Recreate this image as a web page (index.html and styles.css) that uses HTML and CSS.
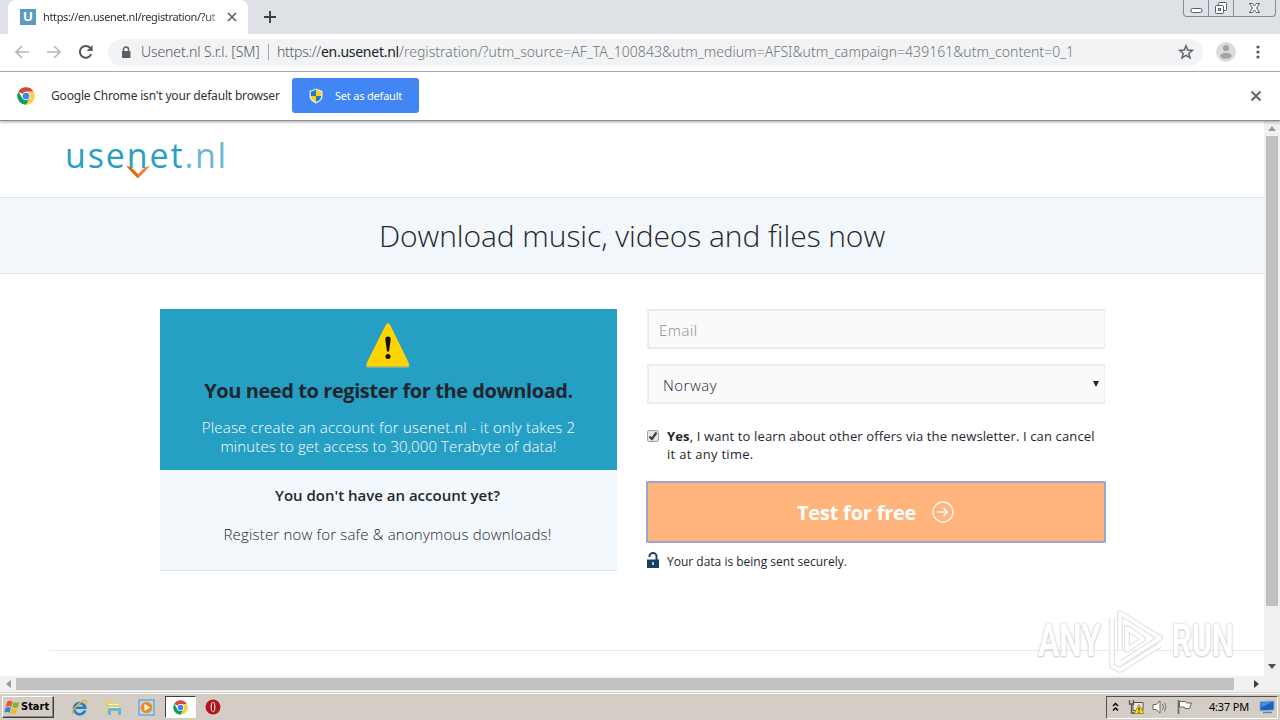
FILE: index.html
```html
<!DOCTYPE html>
<html lang="en">
<head>
<meta charset="utf-8">
<title>Usenet.nl registration</title>
<link rel="stylesheet" href="styles.css">
</head>
<body>
<svg class="defs" width="0" height="0">
  <symbol id="chrome" viewBox="0 0 48 48">
    <circle cx="24" cy="24" r="23" fill="#fff"/>
    <path d="M24 24 4 12.500A23 23 0 0 1 44 12.500H24z" fill="#db4437"/>
    <path d="M44 12.500A23 23 0 0 1 24 47L34 29.500 24 12.500z" fill="#ffcd40"/>
    <path d="M4 12.500A23 23 0 0 0 24 47L34 29.500H14z" fill="#0f9d58"/>
    <circle cx="24" cy="24" r="11.500" fill="#fff"/>
    <circle cx="24" cy="24" r="9" fill="#4285f4"/>
  </symbol>
</svg>
<div class="screen">
  <header class="tabstrip">
    <div class="tab">
      <span class="favicon">U</span>
      <span class="tab-title">https://en.usenet.nl/registration/?ut</span>
      <svg class="tab-close" width="10" height="10" viewBox="0 0 10 10"><path d="M1 1l8 8M9 1l-8 8" stroke="#5f6368" stroke-width="1.700"/></svg>
    </div>
    <svg class="new-tab" width="14" height="14" viewBox="0 0 14 14"><path d="M7 1v12M1 7h12" stroke="#3c4043" stroke-width="1.900"/></svg>
    <div class="window-buttons">
      <span class="wb-min"><svg width="13" height="16" viewBox="0 0 13 16"><rect x="1" y="8.500" width="11" height="4" rx="1.500" fill="#fff" stroke="#555b66"/></svg></span>
      <span class="wb-max"><svg width="14" height="16" viewBox="0 0 14 16"><g fill="#fff" stroke="#555b66"><rect x="4.500" y="2.500" width="8" height="8" rx="1"/><rect x="1.500" y="5.500" width="8" height="8" rx="1"/><rect x="4.500" y="8.500" width="2" height="2"/></g></svg></span>
      <span class="wb-close"><svg width="13" height="16" viewBox="0 0 13 16"><path d="M1.500 3.500h3l2 2.500 2-2.500h3L8.500 8l3 4.500h-3l-2-2.500-2 2.500h-3L4.500 8z" fill="#fff" stroke="#555b66"/></svg></span>
    </div>
  </header>

  <div class="toolbar">
    <svg class="nav" width="16" height="16" viewBox="0 0 16 16"><path d="M15 8H2M8 2 2 8l6 6" fill="none" stroke="#b5b7ba" stroke-width="1.700"/></svg>
    <svg class="nav" width="16" height="16" viewBox="0 0 16 16"><path d="M1 8h13M8 2l6 6-6 6" fill="none" stroke="#b5b7ba" stroke-width="1.700"/></svg>
    <svg class="nav" width="16" height="16" viewBox="0 0 16 16"><path d="M13.200 10.200A5.900 5.900 0 1 1 12.300 4" fill="none" stroke="#55595e" stroke-width="2"/><path d="M14.600 1v6H8.700z" fill="#55595e"/></svg>
    <div class="omnibox">
      <svg class="lock" width="10" height="13" viewBox="0 0 10 13"><path d="M2.500 6V3.500a2.500 2.500 0 0 1 5 0V6" fill="none" stroke="#5a5e63" stroke-width="1.500"/><rect x="1" y="5" width="8.500" height="7" rx="1" fill="#5a5e63"/></svg>
      <span class="issuer">Usenet.nl S.r.l. [SM]</span>
      <span class="divider"></span>
      <span class="url-a">https://<b>en.usenet.nl</b></span><span class="url-b">/registration/?utm_source=AF_TA_100843&amp;utm_medium=AFSI&amp;utm_campaign=439161&amp;utm_content=0_1</span>
      <svg class="star" width="16" height="16" viewBox="0 0 16 16"><path d="M8 1.800l1.700 4.300 4.700.3-3.600 3 1.200 4.500L8 11.400l-4 2.500 1.200-4.500-3.600-3 4.700-.3z" fill="none" stroke="#5f6368" stroke-width="1.500"/></svg>
    </div>
    <svg class="avatar" width="20" height="20" viewBox="0 0 20 20"><circle cx="10" cy="10" r="10" fill="#dcdcdc"/><circle cx="10" cy="6" r="3.100" fill="#a5a5a5"/><ellipse cx="10" cy="13.800" rx="5.800" ry="3" fill="#a5a5a5"/></svg>
    <svg class="kebab" width="4" height="14" viewBox="0 0 4 14"><g fill="#55595e"><circle cx="2" cy="2" r="1.600"/><circle cx="2" cy="7" r="1.600"/><circle cx="2" cy="12" r="1.600"/></g></svg>
  </div>

  <div class="infobar">
    <svg width="18" height="18"><use href="#chrome"/></svg>
    <span class="info-text">Google Chrome isn't your default browser</span>
    <div class="set-default">
      <svg width="14" height="16" viewBox="0 0 14 16"><path d="M7 .5 13.500 3v5c0 4-3.500 6-6.500 7.500C4 14 .5 12 .5 8V3z" fill="#e8edf3"/><path d="M7 1.800V8H1.800V3.800z" fill="#2478c8"/><path d="M7 1.800V8h5.200V3.800z" fill="#fcd116"/><path d="M7 14V8H1.800c0 3 2 4.500 5.200 6z" fill="#fcd116"/><path d="M7 14V8h5.200c0 3-2 4.500-5.200 6z" fill="#2478c8"/></svg>
      <span>Set as default</span>
    </div>
    <svg class="info-close" width="12" height="12" viewBox="0 0 12 12"><path d="M1.500 1.500l9 9M10.500 1.500l-9 9" stroke="#5f6368" stroke-width="1.900"/></svg>
  </div>

  <div class="view">
    <main class="page">
      <div class="brand">
        <span class="brand-name">usenet</span><span class="brand-tld">.nl</span>
        <svg class="brand-check" width="26" height="14" viewBox="0 0 26 14"><path d="M1 1q4 0 7 3l5 5v4.500L7 7.500Q4 4 1 1z" fill="#e3680c"/><path d="M13 13.500V9l5-5q3-3 7-3-3 3-6 6.500z" fill="#f58345"/></svg>
      </div>
      <h1 class="banner"><span>Download music, videos and files now</span></h1>
      <div class="columns">
        <section class="promo">
          <div class="promo-top">
            <svg width="46" height="46" viewBox="0 0 46 46"><path d="M20.500 3.500q2.500-4.500 5 0l18 37q1.500 4-2.500 4H4q-4 0-2-4z" fill="#ffd500"/><path d="M1.500 43.500q.5 1.500 2.500 1.500h37.500q2 0 2.500-1.500" fill="none" stroke="#d8c06a" stroke-width="1.200"/><path d="M20.300 17.500q0-3 2.700-3t2.700 3L24 29.500h-2z" fill="#111"/><circle cx="23" cy="34.500" r="2.500" fill="#111"/></svg>
            <h2><span>You need to register for the download.</span></h2>
            <p><span class="p1">Please create an account for usenet.nl - it only takes 2</span><br><span class="p2">minutes to get access to 30,000 Terabyte of data!</span></p>
          </div>
          <div class="promo-bottom">
            <h3>You don't have an account yet?</h3>
            <p>Register now for safe &amp; anonymous downloads!</p>
          </div>
        </section>
        <section class="form">
          <div class="field email">Email</div>
          <div class="field country"><span>Norway</span><svg width="6" height="6" viewBox="0 0 6 6"><path d="M0 0h6L3 6z" fill="#222"/></svg></div>
          <div class="consent">
            <span class="checkbox"><svg width="10" height="10" viewBox="0 0 10 10"><path d="M1.500 5.500l2.400 2.500L8.500 1.500" fill="none" stroke="#3c3f44" stroke-width="2.200"/></svg></span>
            <p><span class="c1"><b>Yes</b>, I want to learn about other offers via the newsletter. I can cancel</span><br><span class="c2">it at any time.</span></p>
          </div>
          <div class="submit"><span>Test for free</span><svg width="22" height="22" viewBox="0 0 22 22"><g fill="none" stroke="#fff" stroke-width="1.300"><circle cx="11" cy="11" r="10"/><path d="M5.500 11h10M11.500 7l4 4-4 4"/></g></svg></div>
          <div class="secure"><svg width="12" height="16" viewBox="0 0 12 16"><path d="M2.500 5V4a3.500 3 0 0 1 7 0V8" fill="none" stroke="#1c3f60" stroke-width="1.900"/><rect y="7.500" width="12" height="8.500" fill="#1c3f60"/><rect x="5" y="10" width="2" height="3" fill="#9bd0e0"/></svg><span>Your data is being sent securely.</span></div>
        </section>
      </div>
      <hr class="rule">
    </main>
    <div class="vscroll">
      <svg width="8" height="5" viewBox="0 0 8 5"><path d="M0 5h8L4 0z" fill="#999"/></svg>
      <div class="vthumb"></div>
      <svg width="8" height="5" viewBox="0 0 8 5"><path d="M0 0h8L4 5z" fill="#505050"/></svg>
    </div>
    <div class="watermark">
      <span class="wm-any">ANY</span>
      <svg width="58" height="66" viewBox="0 0 58 66"><g fill="none" stroke-linejoin="round" stroke="#e2e2e2" stroke-width="6"><path d="M13 42V5l40 25-39 25"/><path d="M5 10v48l8 4 40-25"/><path d="M20 20v22l16-11z"/></g><g fill="none" stroke-linejoin="round" stroke="#fff" stroke-width="3.500"><path d="M13 42V5l40 25-39 25"/><path d="M5 10v48l8 4 40-25"/><path d="M20 20v22l16-11z"/></g></svg>
      <span class="wm-run">RUN</span>
    </div>
  </div>

  <div class="hscroll">
    <svg width="5" height="8" viewBox="0 0 5 8"><path d="M5 0v8L0 4z" fill="#999"/></svg>
    <div class="hthumb"></div>
    <svg class="right" width="5" height="8" viewBox="0 0 5 8"><path d="M0 0v8l5-4z" fill="#404040"/></svg>
  </div>

  <footer class="taskbar">
    <div class="start">
      <svg width="17" height="17" viewBox="0 0 16 16"><path d="M3 2.500Q5.500 1 8 2.500L6.800 7.500Q4.500 6 1.700 7.300z" fill="#e8592b"/><path d="M8.900 2.900q2.500 1.300 5.500 0L13 8q-2.500 1-5.200-.2z" fill="#7fb52e"/><path d="M1.500 8.200q2.500-1.200 5 .2L5.300 13Q3 11.700.3 12.800z" fill="#3a83cf"/><path d="M7.400 8.700q2.500 1.200 5.300.2l-1.300 4.800q-2.500 1.200-5.200-.2z" fill="#f5b921"/></svg>
      <span>Start</span>
    </div>
    <div class="quick">
      <svg width="17" height="17" viewBox="0 0 17 17"><path d="M14 11.500A5.600 5.600 0 1 1 14.200 8.800H4" fill="none" stroke="#1c7fd0" stroke-width="2.600"/><path d="M2 15.500C-1 12 10 1 15 1.500c1.500.5.500 3-.5 4" fill="none" stroke="#e8b62c" stroke-width="1.300"/></svg>
      <svg width="17" height="17" viewBox="0 0 17 17"><path d="M1 2h5l1 2h7v10H1z" fill="#e9cf70"/><path d="M3 5h11v6H3z" fill="#f8efb5"/><path d="M3 9h13v7h-3v-4H6v4H3z" fill="#66b6e4"/><path d="M2 7h12" stroke="#8bc06a"/></svg>
      <svg width="17" height="17" viewBox="0 0 17 17"><rect x="1" y="1" width="15" height="15" fill="#b9d9f4" stroke="#4b8fd0"/><circle cx="8.500" cy="8.500" r="5.800" fill="#f28a18"/><path d="M6.500 5v7l5.500-3.500z" fill="#fff"/></svg>
      <div class="active-task"><svg width="15" height="15"><use href="#chrome"/></svg></div>
      <svg class="opera" width="16" height="16" viewBox="0 0 16 16"><circle cx="8" cy="8" r="7.500" fill="#b91319"/><ellipse cx="8" cy="8" rx="2.800" ry="5.500" fill="#f3e2e0" stroke="#6d0b0e" stroke-width=".6"/><ellipse cx="8" cy="8" rx="1.200" ry="4.500" fill="#a21116"/></svg>
    </div>
    <div class="tray">
      <svg width="7" height="10" viewBox="0 0 7 10"><path d="M1 4l2.500-2.500L6 4M1 8.500L3.500 6 6 8.500" fill="none" stroke="#000" stroke-width="1.400"/></svg>
      <svg class="net" width="17" height="16" viewBox="0 0 17 16"><path d="M5 3.500h10v8H5z" fill="#e9e9e9" stroke="#555"/><path d="M1.500 1v4h4V1M3.500 5v9H7" fill="none" stroke="#555" stroke-width="1.300"/><path d="M11 5.500l5 9H6z" fill="#ffdc18" stroke="#8b7300" stroke-width=".7"/><path d="M11 8.500v3M11 12.500v1.200" stroke="#222" stroke-width="1.200"/></svg>
      <svg class="snd" width="17" height="16" viewBox="0 0 17 16"><path d="M1 5.500h3L8 2v12l-4-3.500H1z" fill="#fff" stroke="#666"/><path d="M10.500 5q2 3 0 6M12.500 3.500q3 4.500 0 9" fill="none" stroke="#777"/></svg>
      <svg class="flag" width="17" height="16" viewBox="0 0 17 16"><path d="M2.500 1v14" stroke="#666" stroke-width="1.600"/><path d="M3.500 2.500h6l1 1.500h5l-2 5.500H9l-1-1.500H3.500z" fill="#fff" stroke="#666"/></svg>
      <span class="clock">4:37 PM</span>
      <svg class="desk" width="16" height="14" viewBox="0 0 16 14"><path d="M1 1.500 15 1v9l-14 1z" fill="#1763bd" stroke="#8db5df"/><path d="M2 2.500 13 2 3 7z" fill="#4a94df"/><path d="M4 12.500h9" stroke="#697f9c" stroke-width="1.500"/></svg>
    </div>
  </footer>
</div>
</body>
</html>
```

FILE: styles.css
```css
* { box-sizing: border-box; }
body { margin: 0; background: #fff; font-family: "Open Sans", "Noto Sans", sans-serif; }
h1, h2, h3, p { margin: 0; font-weight: inherit; }
svg { display: block; flex: none; }
.defs { position: absolute; }
.screen { width: 1280px; height: 720px; display: flex; flex-direction: column; overflow: hidden; white-space: nowrap; }

.tabstrip { height: 34px; flex: none; background: #dee1e6; display: flex; align-items: flex-start; }
.tab { width: 240px; height: 34px; margin-left: 8px; padding-left: 12px; background: #fff; border-radius: 8px 8px 0 0; display: flex; align-items: center; }
.favicon { width: 16px; height: 16px; background: #5a9bc3; color: #fff; font: 700 13px/16px "Liberation Sans", sans-serif; text-align: center; }
.tab-title { width: 176px; margin-left: 7px; font: 11px/16px "Noto Sans", sans-serif; color: #303236; letter-spacing: -.36px; -webkit-mask-image: linear-gradient(90deg, #000 92%, rgba(0,0,0,.3)); mask-image: linear-gradient(90deg, #000 92%, rgba(0,0,0,.3)); }
.tab-close { margin-left: 8px; }
.new-tab { margin: 10px 0 0 15px; }
.window-buttons { margin-left: auto; margin-right: 4px; display: flex; height: 17px; border: 1px solid #858b96; border-top: 0; border-radius: 0 0 4px 4px; }
.window-buttons span { display: flex; justify-content: center; border-right: 1px solid #858b96; }
.wb-min { width: 25px; }
.wb-max { width: 25px; }
.window-buttons .wb-close { width: 41px; border-right: 0; }

.toolbar { height: 38px; flex: none; display: flex; align-items: center; padding: 0 0 1px 14px; border-bottom: 1px solid #b4b4b8; background: #fff; }
.nav { margin-right: 16px; }
.omnibox { width: 1095px; height: 27px; margin-left: -2px; border-radius: 14px; background: #f1f3f4; display: flex; align-items: center; padding-left: 13px; font: 300 14px/20px "Noto Sans", sans-serif; color: #55595f; }
.issuer { margin-left: 10px; letter-spacing: -.1px; width: 120px; }
.divider { width: 1px; height: 16px; background: #a5a8ac; margin: 0 8px 0 7px; }
.url-a { width: 122px; letter-spacing: -.26px; }
.url-a b { font-weight: 400; color: #202124; }
.url-b { color: #707478; letter-spacing: .04px; }
.star { margin-left: auto; margin-right: 9px; }
.avatar { margin-left: 13px; }
.kebab { margin-left: 20px; }

.infobar { height: 49px; flex: none; display: flex; align-items: center; padding: 0 0 1px 17px; background: #fff; border-bottom: 1px solid #8c8c8c; box-shadow: 0 1px 3px rgba(0,0,0,.35); position: relative; z-index: 1; }
.info-text { width: 229px; margin-left: 16px; font: 12px/16px "Noto Sans", sans-serif; color: #303236; letter-spacing: -.18px; }
.set-default { width: 127px; height: 35px; margin-left: 12px; border-radius: 3px; background: #4285f4; color: #fff; display: flex; align-items: center; padding-left: 17px; font: 11px/16px "Noto Sans", sans-serif; }
.set-default span { margin-left: 12px; letter-spacing: -.2px; }
.info-close { margin-left: auto; margin-right: 18px; }

.view { height: 555px; flex: none; display: flex; position: relative; }
.page { width: 1264px; color: #1f262d; font-weight: 300; }
.brand { height: 76px; padding: 7px 0 0 65px; position: relative; font: 300 34px/54px "Open Sans", sans-serif; color: #2aa0bf; }
.brand-name { font-weight: 400; letter-spacing: 1.9px; }
.brand-tld { color: #6cb9cd; letter-spacing: 1.5px; font-weight: 400; }
.brand-check { position: absolute; left: 125px; top: 44px; }
.banner { height: 77px; border: 1px solid #d5e9ec; border-width: 1px 0; background: #f1f7fa; font-size: 30px; font-weight: 300; line-height: 75px; letter-spacing: -.08px; text-align: center; }
.columns { display: flex; gap: 30px; margin: 35px 0 0 160px; }
.promo { width: 457px; height: 262px; text-align: center; }
.promo-top { height: 161px; background: #269fc4; color: #fff; padding-top: 13px; }
.promo-top svg { margin: 0 auto 0 205px; }
.promo-top h2 { margin-top: 9px; font-size: 20px; line-height: 28px; font-weight: 700; color: #1f262d; letter-spacing: -.42px; }
.promo-top p { margin-top: 13px; font-size: 15px; line-height: 19px; }
.p1 { letter-spacing: .21px; }
.p2 { letter-spacing: .11px; }
.promo-bottom { height: 101px; background: #f2f8fb; border-bottom: 1px solid #d5e4e9; padding: 15px 2px 0 0; font-size: 15px; line-height: 20px; }
.promo-bottom h3 { font-size: 15px; font-weight: 600; }
.promo-bottom p { margin-top: 19px; letter-spacing: .18px; }
.form { width: 458px; }
.field { height: 40px; border: 2px solid #ececec; border-right-width: 1px; background: #fafafa; font-size: 15px; line-height: 38px; letter-spacing: .5px; display: flex; }
.email { padding-left: 10px; color: #85888c; margin-bottom: 15px; }
.country { padding: 0 5px 0 14px; justify-content: space-between; line-height: 38px; }
.country svg { margin-top: 15px; }
.consent { display: flex; margin-top: 23px; font-size: 13px; line-height: 18px; font-weight: 400; }
.c1 { letter-spacing: .13px; }
.c2 { letter-spacing: .28px; }
.checkbox { width: 12px; height: 12px; margin: 3px 8px 0 0; border: 1px solid #a4a4a4; border-radius: 2px; background: #e6e6e6; }
.submit { width: 460px; height: 62px; margin: 18px 0 0 -1px; border: 2px solid #97a6d4; border-radius: 2px; background: #ffb47b; color: #fff; display: flex; align-items: center; padding-left: 149px; font-size: 20px; font-weight: 700; letter-spacing: -.22px; }
.submit svg { margin-left: 16px; }
.secure { display: flex; margin-top: 9px; font-size: 12px; line-height: 20px; font-weight: 400; gap: 8px; }
.rule { height: 1px; border: 0; background: #e9e9e9; margin: 78px 0 0 49px; }
.vscroll { width: 16px; background: #f1f1f1; display: flex; flex-direction: column; align-items: center; padding-top: 5px; }
.vthumb { width: 12px; height: 470px; margin: 5px 0 58px; background: #c1c1c1; }
.watermark { position: absolute; left: 1038px; top: 487px; display: flex; align-items: center; gap: 7px; font: 700 44px/66px "Roboto", sans-serif; color: #fff; text-shadow: 0 0 3px #bbb, 0 1px 2px #ccc; opacity: .9; }
.watermark span { display: block; transform-origin: 0 50%; }
.wm-any { width: 62px; transform: scaleX(.72); }
.wm-run { width: 64px; transform: scaleX(.7); }

.hscroll { height: 16px; flex: none; background: #f1f1f1; display: flex; align-items: center; padding-left: 6px; }
.hthumb { width: 1218px; height: 12px; margin-left: 5px; background: #c1c1c1; }
.hscroll .right { margin-left: 20px; }

.taskbar { height: 28px; flex: none; border-top: 1px solid #d4d0c8; box-shadow: inset 0 1px #fff; background: #d4cdc5; display: flex; align-items: center; padding: 1px 2px 0 2px; }
.start { width: 52px; height: 22px; display: flex; align-items: center; padding-left: 1px; border: 1px solid; border-color: #fff #404040 #404040 #fff; box-shadow: inset -1px -1px #8c8780; font: 700 11px/20px "DejaVu Sans Condensed", "DejaVu Sans", sans-serif; color: #000; }
.quick { display: flex; align-items: center; margin-left: 17px; gap: 16.5px; }
.active-task { width: 31px; height: 22px; margin-left: -7px; border: 1px solid; border-color: #404040 #fff #fff #404040; background: #fff; display: flex; align-items: center; justify-content: center; }
.opera { margin-left: -7px; }
.tray { width: 172px; height: 23px; margin-left: auto; border: 1px solid; border-color: #55504a #fff #fff #55504a; display: flex; align-items: center; padding-left: 5px; color: #000; }
.net { margin-left: 9px; }
.snd { margin-left: 7px; }
.flag { margin-left: 7px; }
.clock { margin-left: 16px; width: 41px; font: 11px/16px "Noto Sans", sans-serif; letter-spacing: -.2px; }
.desk { margin-left: 9px; }
```
